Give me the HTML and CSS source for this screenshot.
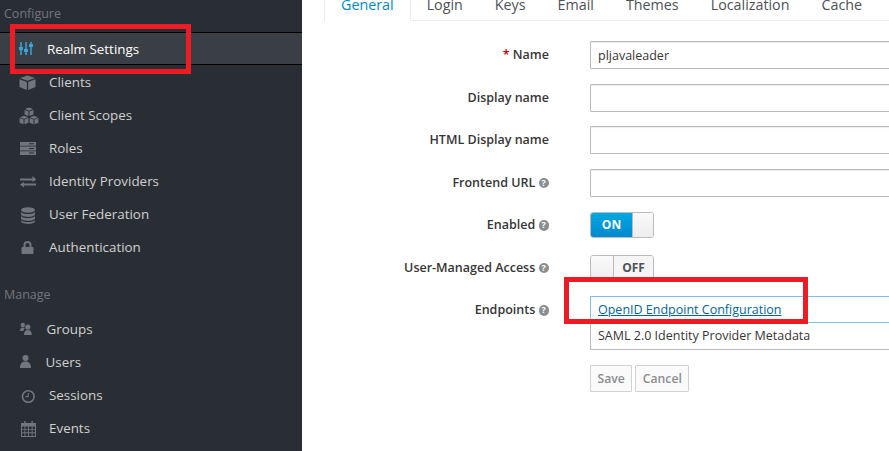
FILE: index.html
```html
<!DOCTYPE html>
<html lang="en">
<head>
  <meta charset="UTF-8" />
  <title>Realm Settings</title>
  <link rel="stylesheet" href="styles.css">
</head>
<body>
  <aside class="sidebar">
    <h2 class="nav-heading first">Configure</h2>
    <ul class="nav-list">
      <li class="nav-item active">
        <svg class="nav-icon" viewBox="0 0 20 20"><path d="M2 3v13M7 3v13M12 3v13" stroke="currentColor" stroke-width="1.500" fill="none"/><path d="M0 8h4v3H0zM5 10h4v3H5zM10 5h4v3h-4z" fill="currentColor"/></svg>
        Realm Settings
      </li>
      <li class="nav-item">
        <svg class="nav-icon" viewBox="0 0 20 20"><path d="M8.500 3.500l7.500 2.600-7.500 2.700L1 6.100zM.5 7.200l7.300 2.700v8.100L.5 15zM16.500 7.200v7.800L9.200 18V9.900z" fill="currentColor"/></svg>
        Clients
      </li>
      <li class="nav-item">
        <svg class="nav-icon" viewBox="0 -1.500 20 20"><path d="M10 1l4 1.600L10 4.200 6 2.600zM5.600 3.400l3.900 1.500v4.600L5.600 8zM14.400 3.400V8l-3.900 1.500V4.900zM5 9.200l4 1.600-4 1.600-4-1.600zM15 9.200l4 1.600-4 1.600-4-1.600zM.6 11.600l3.900 1.500v4.700L.6 16.200zM9.400 11.600v4.600l-3.900 1.600v-4.700zM10.600 11.600l3.900 1.500v4.700l-3.900-1.600zM19.400 11.600v4.600l-3.900 1.600v-4.700z" fill="currentColor"/></svg>
        Client Scopes
      </li>
      <li class="nav-item">
        <svg class="nav-icon" viewBox="0 0 20 20"><path fill-rule="evenodd" d="M1 4h16v3.800H1zM1 8.600h16v3.800H1zM1 13.200h16V17H1zM10 5.300v1h5v-1zM10 9.900v1h5v-1zM10 14.500v1h5v-1z" fill="currentColor"/></svg>
        Roles
      </li>
      <li class="nav-item">
        <svg class="nav-icon" viewBox="0 0 20 20"><path d="M1 7.500h12.500V5l3.800 3.500-3.800 2.500V9.500H1zM17 12.500H5V10.900L1 13.500l4 3v-2h12z" fill="currentColor"/></svg>
        Identity Providers
      </li>
      <li class="nav-item">
        <svg class="nav-icon" viewBox="0 0 20 20"><ellipse cx="9" cy="6" rx="7" ry="2.800" fill="currentColor"/><path d="M2 8c1 1.500 3.500 2 7 2s6-.5 7-2v2.300c0 1.500-3 2.600-7 2.600s-7-1.100-7-2.600zM2 12c1 1.500 3.500 2 7 2s6-.5 7-2v2.300c0 1.500-3 2.600-7 2.600s-7-1.100-7-2.600zM2 16c1 1.500 3.500 2 7 2s6-.5 7-2v1.300c0 1.500-3 2.600-7 2.600s-7-1.100-7-2.600z" fill="currentColor"/></svg>
        User Federation
      </li>
      <li class="nav-item">
        <svg class="nav-icon" viewBox="0 0 20 20"><path fill-rule="evenodd" d="M4.500 10V8a4 4 0 0 1 8 0v2h1a1 1 0 0 1 1 1v5a1 1 0 0 1-1 1h-10a1 1 0 0 1-1-1v-5a1 1 0 0 1 1-1zM6.500 10h4V8a2 2 0 0 0-4 0z" fill="currentColor"/></svg>
        Authentication
      </li>
    </ul>
    <h2 class="nav-heading">Manage</h2>
    <ul class="nav-list">
      <li class="nav-item">
        <svg class="nav-icon tight-groups" viewBox="0 0 20 20"><circle cx="3.800" cy="6" r="2.200" fill="currentColor"/><path d="M1 12c0-2.500 1-3.500 3-3.500.8 0 1.400.2 1.900.6C4.900 9.900 4.500 11 4.500 12z" fill="currentColor"/><circle cx="8.800" cy="8" r="2.600" fill="currentColor"/><path d="M5 16c0-3.500 1.200-5 3.800-5s4 1.500 4 5z" fill="currentColor"/></svg>
        Groups
      </li>
      <li class="nav-item">
        <svg class="nav-icon tight-users" viewBox="0 0 20 20"><circle cx="6.500" cy="6" r="3" fill="currentColor"/><path d="M1 16c0-4 1.800-6.500 5.500-6.500S12 12 12 16z" fill="currentColor"/></svg>
        Users
      </li>
      <li class="nav-item">
        <svg class="nav-icon" viewBox="0 0 20 20"><circle cx="9.300" cy="11.500" r="5.800" fill="none" stroke="currentColor" stroke-width="1.600"/><path d="M9.800 8v4.300H6.500v-1.200h2.200V8z" fill="currentColor"/></svg>
        Sessions
      </li>
      <li class="nav-item">
        <svg class="nav-icon" viewBox="0 0 20 20"><path fill-rule="evenodd" d="M2 5h15v14H2zM3 8.500v2.400h2.500V8.500zM6.400 8.500v2.400h2.700V8.500zM10 8.500v2.400h2.700V8.500zM13.600 8.500v2.400H16V8.500zM3 11.800v2.500h2.500v-2.500zM6.400 11.800v2.500h2.700v-2.500zM10 11.800v2.500h2.700v-2.500zM13.600 11.800v2.500H16v-2.500zM3 15.200V18h2.500v-2.800zM6.400 15.200V18h2.700v-2.800zM10 15.200V18h2.700v-2.800zM13.600 15.200V18H16v-2.800z" fill="currentColor"/><path d="M5.200 3h1.400v3.500H5.200zM12.400 3h1.400v3.500h-1.400z" fill="currentColor"/></svg>
        Events
      </li>
    </ul>
  </aside>

  <main class="content">
    <ul class="tabs">
      <li class="tab active">General</li>
      <li class="tab">Login</li>
      <li class="tab">Keys</li>
      <li class="tab">Email</li>
      <li class="tab">Themes</li>
      <li class="tab">Localization</li>
      <li class="tab">Cache</li>
    </ul>

    <form class="settings-form">
      <div class="form-row">
        <label class="form-label"><span class="required">*</span> Name</label>
        <input class="form-input" type="text" value="pljavaleader">
      </div>
      <div class="form-row">
        <label class="form-label">Display name</label>
        <input class="form-input" type="text">
      </div>
      <div class="form-row">
        <label class="form-label">HTML Display name</label>
        <input class="form-input" type="text">
      </div>
      <div class="form-row">
        <label class="form-label">Frontend URL <span class="help">?</span></label>
        <input class="form-input" type="text">
      </div>
      <div class="form-row">
        <label class="form-label">Enabled <span class="help">?</span></label>
        <div class="switch">
          <span class="switch-on">ON</span>
          <span class="switch-handle"></span>
        </div>
      </div>
      <div class="form-row">
        <label class="form-label">User-Managed Access <span class="help">?</span></label>
        <div class="switch">
          <span class="switch-handle off"></span>
          <span class="switch-off">OFF</span>
        </div>
      </div>
      <div class="form-row endpoints">
        <label class="form-label">Endpoints <span class="help">?</span></label>
        <div class="endpoint-list">
          <a class="endpoint focused" href="#">OpenID Endpoint Configuration</a>
          <span class="endpoint">SAML 2.0 Identity Provider Metadata</span>
        </div>
      </div>
      <div class="form-row">
        <span class="form-label"></span>
        <div class="form-buttons">
          <button class="btn" type="button" disabled>Save</button>
          <button class="btn" type="button" disabled>Cancel</button>
        </div>
      </div>
    </form>
  </main>

  <div class="callout callout-realm"></div>
  <div class="callout callout-openid"></div>
</body>
</html>
```

FILE: styles.css
```css
* {
  box-sizing: border-box;
}
html, body {
  height: 451px;
}
body {
  margin: 0;
  display: flex;
  overflow: hidden;
  position: relative;
  font-family: "Open Sans", sans-serif;
  font-size: 12.500px;
  color: #363636;
  background: #fff;
}

/* sidebar */
.sidebar {
  width: 302px;
  flex: none;
  background: #292e34;
  font-size: 13.400px;
}
.nav-heading {
  margin: 0;
  padding: 22px 0 0 4px;
  height: 49px;
  line-height: 20px;
  font-size: 12.500px;
  font-weight: 400;
  color: #72767b;
}
.nav-heading.first {
  padding-top: 4px;
  height: 32px;
}
.nav-list {
  list-style: none;
  margin: 0;
  padding: 0;
}
.nav-item {
  display: flex;
  align-items: center;
  height: 33px;
  padding-left: 19px;
  color: #d1d1d1;
}
.nav-item.active {
  color: #fff;
  background: #393f44;
  border-top: 1px solid #000;
  border-bottom: 1px solid #000;
}
.nav-icon {
  width: 20px;
  height: 20px;
  flex: none;
  margin-right: 10px;
  color: #72767b;
}
.active .nav-icon {
  color: #39a5dc;
  margin-right: 8px;
}
.tight-groups {
  margin-right: 7.500px;
}
.tight-users {
  margin-right: 6.500px;
}

/* tabs */
.content {
  flex: 1;
  min-width: 0;
  padding-left: 22px;
}
.tabs {
  list-style: none;
  margin: 0;
  padding: 0;
  display: flex;
  height: 21px;
  border-bottom: 1px solid #ececec;
}
.tab {
  padding: 0 16px;
  height: 21px;
  line-height: 10px;
  font-size: 14.300px;
  color: #4d5258;
}
.tab.active {
  color: #0088ce;
  background: #fff;
  border-left: 1px solid #ececec;
  border-right: 1px solid #ececec;
}

/* form */
.settings-form {
  margin-top: 20px;
  width: 640px;
}
.form-row {
  display: flex;
  align-items: center;
  min-height: 28px;
  margin-bottom: 14.500px;
}
.form-row.endpoints {
  align-items: flex-start;
}
.form-label {
  width: 225px;
  flex: none;
  margin-right: 41px;
  text-align: right;
  font-weight: 600;
  line-height: 28px;
}
.required {
  color: #c00;
}
.help {
  display: inline-block;
  width: 10.500px;
  height: 10.500px;
  border-radius: 50%;
  background: #8b8d8f;
  color: #fff;
  font-size: 9px;
  font-weight: 700;
  line-height: 10.500px;
  text-align: center;
  vertical-align: 1px;
}
.form-input {
  flex: 1;
  height: 28px;
  padding: 2px 7px;
  font: inherit;
  color: #363636;
  border: 1px solid #bbb;
  border-radius: 1px;
  box-shadow: inset 0 1px 1px rgba(3, 3, 3, 0.08);
}

/* switches */
.switch {
  display: flex;
  height: 26px;
  width: 64px;
  border: 1px solid #bbb;
  border-radius: 3px;
  overflow: hidden;
  font-weight: 700;
  font-size: 12px;
  line-height: 24px;
  text-align: center;
}
.switch-on {
  width: 41px;
  color: #fff;
  background: linear-gradient(#00a8e1, #0088ce);
}
.switch-off {
  flex: 1;
  color: #4d5258;
  background: #f5f5f5;
}
.switch-handle {
  flex: 1;
  border-left: 1px solid #bbb;
  background: linear-gradient(#fafafa, #ededed);
}
.switch-handle.off {
  flex: none;
  width: 23px;
  border-left: 0;
  border-right: 1px solid #bbb;
}

/* endpoints */
.endpoint-list {
  flex: 1;
  display: flex;
  flex-direction: column;
}
.endpoint {
  display: block;
  height: 27px;
  padding: 0 7px;
  line-height: 26px;
  color: #363636;
  border: 1px solid #bbb;
  border-top: 0;
}
.endpoint.focused {
  color: #00659c;
  border: 1px solid #7dc3e8;
}

/* buttons */
.form-buttons {
  display: flex;
  gap: 3px;
}
.btn {
  height: 27px;
  padding: 0 6.500px;
  font: inherit;
  font-size: 12.200px;
  font-weight: 600;
  color: #8b8d8f;
  background: #fafafa;
  border: 1px solid #d1d1d1;
  border-radius: 1px;
}

/* red markers drawn over the screenshot */
.callout {
  position: absolute;
  border: 5px solid #ed1c24;
}
.callout-realm {
  left: 10px;
  top: 24px;
  width: 181px;
  height: 50px;
}
.callout-openid {
  left: 564px;
  top: 277px;
  width: 244px;
  height: 47px;
}
```
